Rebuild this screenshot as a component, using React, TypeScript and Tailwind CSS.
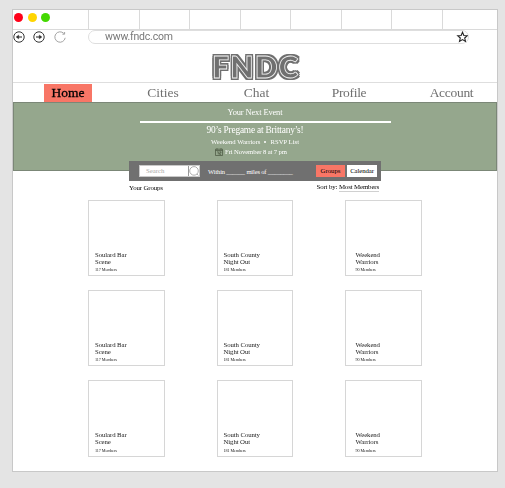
import React from 'react';

const groups = [
  { name: ['Soulard Bar', 'Scene'], members: '117 Members', pad: 'pl-[6px]' },
  { name: ['South County', 'Night Out'], members: '181 Members', pad: 'pl-[5.5px]' },
  { name: ['Weekend', 'Warriors'], members: '90 Members', pad: 'pl-[9.5px]' },
];

function ArrowIcon({ back = false }: { back?: boolean }) {
  return (
    <svg width="12" height="12" viewBox="0 0 12 12" fill="none" stroke="#333" className={back ? '' : '-scale-x-100'}>
      <circle cx="6" cy="6" r="5.2" strokeWidth="1" />
      <path d="M9 6H4" strokeWidth="1.1" />
      <path d="M3 6L5.8 3.9V8.1Z" fill="#333" strokeWidth="0.3" />
    </svg>
  );
}

function Browser() {
  return (
    <>
      <div className="flex h-[20px] shrink-0 border-b border-[#dadada]">
        <div className="flex w-[76px] gap-[4.5px] border-r border-[#dadada] pt-[3px] pl-[1px]">
          <span className="size-[9px] rounded-full bg-[#ff0019]" />
          <span className="size-[9px] rounded-full bg-[#ffd500]" />
          <span className="size-[9px] rounded-full bg-[#44d800]" />
        </div>
        {[0, 1, 2, 3, 4, 5, 6].map((i) => (
          <div key={i} className="w-[50.5px] border-r border-[#dadada]" />
        ))}
      </div>
      <div className="flex h-[14px] shrink-0 items-center">
        <div className="flex w-[75px] gap-[8px]">
          <ArrowIcon back />
          <ArrowIcon />
          <svg width="12" height="12" viewBox="0 0 12 12" fill="none" stroke="#999" className="ml-[1px]">
            <path d="M9.8 2.4A5.2 5.2 0 1 0 11.2 6.8M10.6 1V3.2H8.4" strokeWidth="0.9" />
          </svg>
        </div>
        <div className="flex h-[14px] w-[381px] items-center justify-between rounded-full border border-[#dedede] pl-[16px]">
          <span className="font-['Roboto',sans-serif] text-[10.5px] leading-[14px] tracking-[-0.2px] text-[#777]">www.fndc.com</span>
          <svg width="12" height="12" viewBox="0 0 24 24" fill="none" stroke="#222" strokeWidth="2.2" className="shrink-0">
            <path d="M13 2.5l2.7 6.4 6.9.6-5.2 4.6 1.6 6.8-6-3.6-6 3.6 1.6-6.8-5.2-4.6 6.9-.6z" />
          </svg>
        </div>
      </div>
    </>
  );
}

function Nav() {
  return (
    <nav className="flex h-[20px] shrink-0 border-t border-[#dedede] pt-[1px] pl-[31px] text-[13.5px] leading-[18px] text-[#707070]">
      <span className="h-[18px] w-[48px] bg-[#f87666] text-center text-black [-webkit-text-stroke:0.3px_black]">Home</span>
      <span className="w-[142px] text-center">Cities</span>
      <span className="w-[45px] text-center">Chat</span>
      <span className="w-[140px] text-center tracking-[-0.3px]">Profile</span>
      <span className="w-[65px] text-center tracking-[-0.3px]">Account</span>
    </nav>
  );
}

function NextEvent() {
  return (
    <section className="flex h-[69px] shrink-0 flex-col items-center border border-[#7b8777] bg-[#95a78d] text-white">
      <h2 className="mt-[2.5px] h-[14px] text-[8.4px] leading-[14px] tracking-[-0.1px]">Your Next Event</h2>
      <div className="mt-[1px] ml-[20px] h-[2px] w-[251px] shrink-0 bg-white" />
      <h1 className="mt-[0.5px] h-[14px] text-[9.4px] leading-[14px] tracking-[-0.2px]">90’s Pregame at Brittany’s!</h1>
      <div className="flex h-[10px] items-center gap-[4px] text-[6.7px] leading-[10px]">
        <span>Weekend Warriors</span>
        <span className="size-[2px] rounded-full bg-white" />
        <span>RSVP List</span>
      </div>
      <div className="mr-[8px] flex h-[10px] items-center gap-[2px] text-[6.7px] leading-[10px] tracking-[-0.12px]">
        <svg width="8" height="8" viewBox="0 0 8 8" fill="none" stroke="#48553f" strokeWidth="0.7">
          <path d="M.5 1.2h7v6.3h-7zM.5 2.5h7M2 .2v1.5M6 .2v1.5M2.2 3.8h1.1v2.6M4.5 3.8h1.4v1.2H4.6v1.4h1.5" />
        </svg>
        <span>Fri November 8 at 7 pm</span>
      </div>
    </section>
  );
}

function SearchBar() {
  return (
    <div className="relative -mt-[10px] ml-[116px] flex h-[20px] w-[252px] shrink-0 items-center bg-[#707070] pl-[10px] text-[6.8px] leading-[11px]">
      <div className="flex h-[12px] w-[61px] border border-[#c9c9c9] bg-white">
        <span className="w-[49px] border-r border-[#999] pl-[6px] leading-[10px] text-[#aaa]">Search</span>
        <svg width="10" height="10" viewBox="0 0 10 10" fill="none" stroke="#999" strokeWidth="0.8">
          <circle cx="5" cy="4.9" r="4.3" />
          <path d="M8 8l1.4 1.4" />
        </svg>
      </div>
      <span className="ml-[8px] w-[108px] text-[6.5px] tracking-[-0.15px] whitespace-nowrap text-white">Within ______ miles of ________</span>
      <span className="h-[12px] w-[29px] bg-[#f87666] text-center leading-[12px] text-black">Groups</span>
      <span className="ml-[2px] h-[12px] w-[30px] bg-white text-center leading-[12px] tracking-[-0.1px] text-black">Calendar</span>
    </div>
  );
}

export default function App() {
  return (
    <div className="h-[488px] w-[505px] bg-[#e4e4e4] pt-[9px] pl-[12px] font-['Liberation_Serif',serif]">
      <div className="h-[463px] w-[486px] border border-[#c8c8c8] bg-white">
        <div className="flex h-full flex-col opacity-[0.999] will-change-[opacity]">
          <Browser />
          <header className="flex h-[38px] shrink-0 justify-center pt-[7px] pl-[2px]">
            <span className="font-['Lato',sans-serif] text-[29.5px] leading-[31px] font-extrabold tracking-[1.5px] text-[#707070] [-webkit-text-stroke:0.8px_#f4f4f4] [text-shadow:1.8px_0_#707070,-1.8px_0_#707070,0_1.8px_#707070,0_-1.8px_#707070,1.8px_1.8px_#707070,-1.8px_1.8px_#707070,1.8px_-1.8px_#707070,-1.8px_-1.8px_#707070]">
              FNDC
            </span>
          </header>
          <Nav />
          <NextEvent />
          <SearchBar />
          <div className="flex h-[19px] shrink-0 justify-between pt-[1px] pr-[118px] pl-[116px] text-[6.9px] leading-[11px] tracking-[-0.15px] text-black">
            <span>Your Groups</span>
            <span className="-mt-[1px]">
              Sort by: <span className="inline-block h-[10px] border-b border-[#d0d0d0] leading-[10px]">Most Members</span>
            </span>
          </div>
          <main className="ml-[75px] grid grid-cols-[77px_76px_77px] gap-x-[52px] gap-y-[14px]">
            {[0, 1, 2].map((row) =>
              groups.map((g) => (
                <article
                  key={`${row}-${g.name[0]}`}
                  className={`border border-[#d6d6d6] pt-[50px] text-[#222] ${row === 2 ? 'h-[77px]' : 'h-[76px]'} ${g.pad}`}
                >
                  <h3 className="text-[6.8px] leading-[7px] tracking-[-0.1px]">
                    {g.name[0]}
                    <br />
                    {g.name[1]}
                  </h3>
                  <p className={`text-[4.2px] leading-[6px] tracking-[-0.1px] ${row === 2 ? 'mt-[3px]' : 'mt-[2px]'}`}>{g.members}</p>
                </article>
              )),
            )}
          </main>
        </div>
      </div>
    </div>
  );
}
